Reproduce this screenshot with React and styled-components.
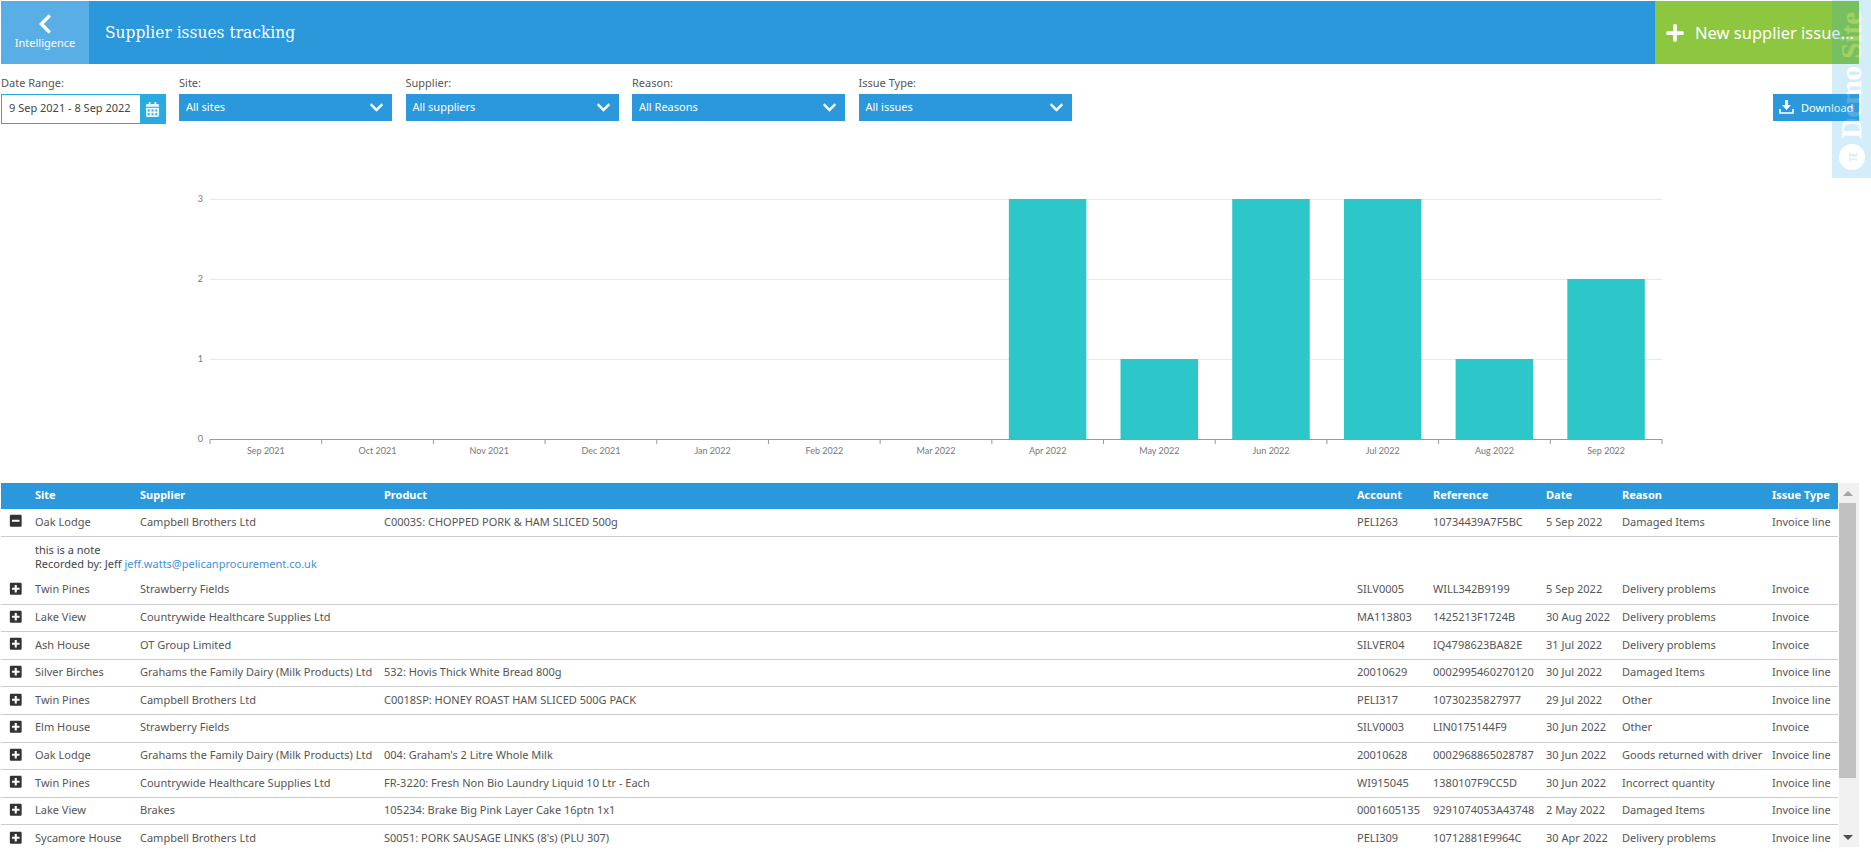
import React from "react";
import styled, { createGlobalStyle } from "styled-components";
import {
  FaChevronLeft,
  FaChevronDown,
  FaPlus,
  FaCalendarAlt,
  FaPlusSquare,
  FaMinusSquare,
} from "react-icons/fa";

const GlobalStyle = createGlobalStyle`
  html, body {
    margin: 0;
    padding: 0;
    background: #fff;
    font-family: "Noto Sans", Lato, sans-serif;
    font-size: 11px;
    color: #555;
    overflow: hidden;
  }
`;

const Page = styled.div`
  width: 1858px;
  height: 851px;
  padding: 1px 0 0 1px;
  display: flex;
  flex-direction: column;
`;

const Header = styled.header`
  display: flex;
  height: 63px;
  background: #2b98dc;
  color: #fff;
`;

const BackTile = styled.a`
  width: 88px;
  background: #5aaee6;
  display: flex;
  flex-direction: column;
  align-items: center;
  padding-top: 12px;
  box-sizing: border-box;
  font-size: 11px;
  svg {
    font-size: 22px;
    margin-bottom: 0;
  }
`;

const Title = styled.h1`
  flex: 1;
  margin: 0;
  padding: 0 0 0 16px;
  line-height: 63px;
  font-family: "DejaVu Serif Condensed", "DejaVu Serif", serif;
  font-size: 17.2px;
  font-weight: 400;
`;

const NewIssue = styled.button`
  width: 204px;
  border: 0;
  padding: 0 0 0 10px;
  background: #8dc63f;
  color: #fff;
  display: flex;
  align-items: center;
  gap: 10px;
  font-family: inherit;
  font-size: 16.5px;
  white-space: nowrap;
  svg {
    font-size: 20px;
    flex: none;
  }
`;

const Filters = styled.div`
  display: flex;
  align-items: flex-start;
  gap: 13.5px;
  padding-top: 12px;
`;

const Field = styled.div`
  display: flex;
  flex-direction: column;
  width: ${(p) => p.$width}px;
`;

const Label = styled.label`
  line-height: 14px;
  margin-bottom: 4px;
  color: #555;
`;

const DateBox = styled.div`
  display: flex;
  height: 30px;
  box-sizing: border-box;
  border: 1px solid #29abe2;
`;

const DateText = styled.span`
  flex: 1;
  padding-left: 7px;
  line-height: 26px;
  color: #444;
  white-space: nowrap;
`;

const CalendarButton = styled.span`
  width: 25px;
  background: #29abe2;
  color: #e8f6fc;
  display: flex;
  align-items: center;
  justify-content: center;
  svg {
    font-size: 15px;
  }
`;

const Select = styled.div`
  height: 27px;
  box-sizing: border-box;
  padding: 0 8px 2px 7px;
  background: #2b98dc;
  color: #fff;
  display: flex;
  align-items: center;
  justify-content: space-between;
  svg {
    font-size: 15px;
    margin-top: 2px;
  }
`;

const DownloadButton = styled.button`
  margin: 18px 0 0 auto;
  width: 86px;
  height: 27px;
  border: 0;
  padding: 0 0 1px 6px;
  background: #2b98dc;
  color: #fff;
  display: flex;
  align-items: center;
  gap: 7px;
  font-family: inherit;
  font-size: 11px;
`;

const ChartSvg = styled.svg`
  display: block;
  margin-top: 6px;
  flex: none;
  text {
    font-family: Lato, "Noto Sans", sans-serif;
    font-size: 9px;
    fill: #777;
  }
`;

const TableArea = styled.div`
  display: flex;
  height: 364px;
  overflow: hidden;
`;

const TableWrap = styled.div`
  width: 1837px;
  overflow: hidden;
`;

const Table = styled.table`
  width: 1837px;
  table-layout: fixed;
  border-collapse: collapse;
`;

const HeadCell = styled.th`
  height: 26px;
  padding: 0 0 4px;
  box-sizing: border-box;
  background: #2b98dc;
  color: #fff;
  font-weight: 700;
  text-align: left;
`;

const Row = styled.tr`
  height: 27.6px;
  border-bottom: 1px solid #ccc;
  &:last-child {
    border-bottom: 0;
  }
`;

const Cell = styled.td`
  padding: 0 0 3px;
  white-space: nowrap;
  overflow: hidden;
  color: #555;
`;

const ToggleCell = styled(Cell)`
  padding-left: 8px;
  color: #333;
  svg {
    display: block;
    font-size: 13.5px;
  }
`;

const NoteRow = styled.tr`
  height: 40px;
`;

const NoteCell = styled.td`
  padding: 6px 0 0;
  vertical-align: top;
  line-height: 14px;
  color: #444;
`;

const MailLink = styled.a`
  color: #3f8fd8;
`;

const ScrollTrack = styled.div`
  width: 20px;
  margin-left: 1px;
  height: 364px;
  background: #f1f1f1;
  display: flex;
  flex-direction: column;
  align-items: flex-start;
`;

const ScrollArrow = styled.span`
  width: 17px;
  height: 20px;
  display: flex;
  align-items: center;
  justify-content: center;
  &::before {
    content: "";
    border-left: 5px solid transparent;
    border-right: 5px solid transparent;
    ${(p) => (p.$down ? "border-top: 5px solid #505050;" : "border-bottom: 5px solid #a3a3a3;")}
  }
`;

const ScrollThumb = styled.span`
  width: 17px;
  height: 275px;
  margin-bottom: auto;
  background: #c1c1c1;
`;

// watermark of the demo environment, lies over the header and the download button
const DemoRibbon = styled.div`
  position: fixed;
  top: 0;
  right: 0;
  width: 39px;
  height: 178px;
  background: #29abe2;
  opacity: 0.2;
  display: flex;
  flex-direction: column;
  align-items: center;
  justify-content: flex-end;
  padding-bottom: 8px;
  box-sizing: border-box;
  color: #fff;
  overflow: hidden;
`;

const DemoText = styled.span`
  writing-mode: vertical-rl;
  transform: rotate(180deg);
  font-family: "Liberation Serif", serif;
  font-weight: 700;
  font-size: 29px;
  line-height: 39px;
  white-space: nowrap;
  margin-bottom: 6px;
`;

const DemoLogo = styled.span`
  width: 26px;
  height: 26px;
  border-radius: 50%;
  background: #fff;
  color: #29abe2;
  display: flex;
  align-items: center;
  justify-content: center;
  font-family: "Liberation Serif", serif;
  font-weight: 700;
  font-size: 17px;
  transform: rotate(-90deg);
`;

const months = ["Sep 2021", "Oct 2021", "Nov 2021", "Dec 2021", "Jan 2022", "Feb 2022", "Mar 2022", "Apr 2022", "May 2022", "Jun 2022", "Jul 2022", "Aug 2022", "Sep 2022"];
const counts = [0, 0, 0, 0, 0, 0, 0, 3, 1, 3, 3, 1, 2];

const chartTop = 130;
const plotLeft = 209;
const bandWidth = 1452 / 13;
const zeroY = 439 - chartTop;

function Chart() {
  return (
    <ChartSvg width="1858" height="353">
      {[1, 2, 3].map((n) => (
        <line key={n} x1={plotLeft} x2={plotLeft + 1452} y1={zeroY - n * 80 + 0.5} y2={zeroY - n * 80 + 0.5} stroke="#e6e9f0" />
      ))}
      {[0, 1, 2, 3].map((n) => (
        <text key={n} x={202} y={zeroY - n * 80 + 3} textAnchor="end">{n}</text>
      ))}
      {counts.map((c, i) =>
        c > 0 ? (
          <rect key={i} x={plotLeft + i * bandWidth + 17} y={zeroY - c * 80} width={77.5} height={c * 80} fill="#2ec7c9" />
        ) : null
      )}
      <line x1={plotLeft} x2={plotLeft + 1452} y1={zeroY + 0.5} y2={zeroY + 0.5} stroke="#999" />
      {months.map((m, i) => (
        <line key={m + "t"} x1={plotLeft + i * bandWidth} x2={plotLeft + i * bandWidth} y1={zeroY} y2={zeroY + 5} stroke="#999" />
      ))}
      <line x1={plotLeft + 1452} x2={plotLeft + 1452} y1={zeroY} y2={zeroY + 5} stroke="#999" />
      {months.map((m, i) => (
        <text key={m + i} x={plotLeft + (i + 0.5) * bandWidth} y={zeroY + 15} textAnchor="middle">{m}</text>
      ))}
    </ChartSvg>
  );
}

function DownloadIcon() {
  return (
    <svg width="15" height="14" viewBox="0 0 15 14" fill="none">
      <path d="M6 0h3v5h3l-4.5 5L3 5h3z" fill="#fff" />
      <path d="M1 9v4h13V9" stroke="#fff" strokeWidth="1.6" />
    </svg>
  );
}

const columns = [34, 105, 244, 973, 76, 113, 76, 150, 66];
const headings = ["", "Site", "Supplier", "Product", "Account", "Reference", "Date", "Reason", "Issue Type"];

const rows = [
  ["Twin Pines", "Strawberry Fields", "", "SILV0005", "WILL342B9199", "5 Sep 2022", "Delivery problems", "Invoice"],
  ["Lake View", "Countrywide Healthcare Supplies Ltd", "", "MA113803", "1425213F1724B", "30 Aug 2022", "Delivery problems", "Invoice"],
  ["Ash House", "OT Group Limited", "", "SILVER04", "IQ4798623BA82E", "31 Jul 2022", "Delivery problems", "Invoice"],
  ["Silver Birches", "Grahams the Family Dairy (Milk Products) Ltd", "532: Hovis Thick White Bread 800g", "20010629", "0002995460270120", "30 Jul 2022", "Damaged Items", "Invoice line"],
  ["Twin Pines", "Campbell Brothers Ltd", "C0018SP: HONEY ROAST HAM SLICED 500G PACK", "PELI317", "10730235827977", "29 Jul 2022", "Other", "Invoice line"],
  ["Elm House", "Strawberry Fields", "", "SILV0003", "LIN0175144F9", "30 Jun 2022", "Other", "Invoice"],
  ["Oak Lodge", "Grahams the Family Dairy (Milk Products) Ltd", "004: Graham's 2 Litre Whole Milk", "20010628", "0002968865028787", "30 Jun 2022", "Goods returned with driver", "Invoice line"],
  ["Twin Pines", "Countrywide Healthcare Supplies Ltd", "FR-3220: Fresh Non Bio Laundry Liquid 10 Ltr - Each", "WI915045", "1380107F9CC5D", "30 Jun 2022", "Incorrect quantity", "Invoice line"],
  ["Lake View", "Brakes", "105234: Brake Big Pink Layer Cake 16ptn 1x1", "0001605135", "9291074053A43748", "2 May 2022", "Damaged Items", "Invoice line"],
  ["Sycamore House", "Campbell Brothers Ltd", "S0051: PORK SAUSAGE LINKS (8's) (PLU 307)", "PELI309", "10712881E9964C", "30 Apr 2022", "Delivery problems", "Invoice line"],
];

const openRow = ["Oak Lodge", "Campbell Brothers Ltd", "C0003S: CHOPPED PORK & HAM SLICED 500g", "PELI263", "10734439A7F5BC", "5 Sep 2022", "Damaged Items", "Invoice line"];

const selects = [
  ["Site:", "All sites"],
  ["Supplier:", "All suppliers"],
  ["Reason:", "All Reasons"],
  ["Issue Type:", "All issues"],
];

export default function App() {
  return (
    <Page>
      <GlobalStyle />
      <Header>
        <BackTile>
          <FaChevronLeft />
          Intelligence
        </BackTile>
        <Title>Supplier issues tracking</Title>
        <NewIssue>
          <FaPlus />
          New supplier issue...
        </NewIssue>
      </Header>

      <Filters>
        <Field $width={164.5}>
          <Label>Date Range:</Label>
          <DateBox>
            <DateText>9 Sep 2021 - 8 Sep 2022</DateText>
            <CalendarButton>
              <FaCalendarAlt />
            </CalendarButton>
          </DateBox>
        </Field>
        {selects.map(([label, value]) => (
          <Field $width={213} key={label}>
            <Label>{label}</Label>
            <Select>
              {value}
              <FaChevronDown />
            </Select>
          </Field>
        ))}
        <DownloadButton>
          <DownloadIcon />
          Download
        </DownloadButton>
      </Filters>

      <Chart />

      <TableArea>
        <TableWrap>
          <Table>
            <colgroup>
              {columns.map((w, i) => (
                <col key={i} width={w} />
              ))}
            </colgroup>
            <thead>
              <tr>
                {headings.map((h, i) => (
                  <HeadCell key={i}>{h}</HeadCell>
                ))}
              </tr>
            </thead>
            <tbody>
              <Row>
                <ToggleCell>
                  <FaMinusSquare />
                </ToggleCell>
                {openRow.map((v, i) => (
                  <Cell key={i}>{v}</Cell>
                ))}
              </Row>
              <NoteRow>
                <td />
                <NoteCell colSpan={8}>
                  this is a note
                  <br />
                  Recorded by: Jeff <MailLink>jeff.watts@pelicanprocurement.co.uk</MailLink>
                </NoteCell>
              </NoteRow>
              {rows.map((row, r) => (
                <Row key={r}>
                  <ToggleCell>
                    <FaPlusSquare />
                  </ToggleCell>
                  {row.map((v, i) => (
                    <Cell key={i}>{v}</Cell>
                  ))}
                </Row>
              ))}
            </tbody>
          </Table>
        </TableWrap>
        <ScrollTrack>
          <ScrollArrow />
          <ScrollThumb />
          <ScrollArrow $down />
        </ScrollTrack>
      </TableArea>

      <DemoRibbon>
        <DemoText>Demo Site</DemoText>
        <DemoLogo>π</DemoLogo>
      </DemoRibbon>
    </Page>
  );
}
